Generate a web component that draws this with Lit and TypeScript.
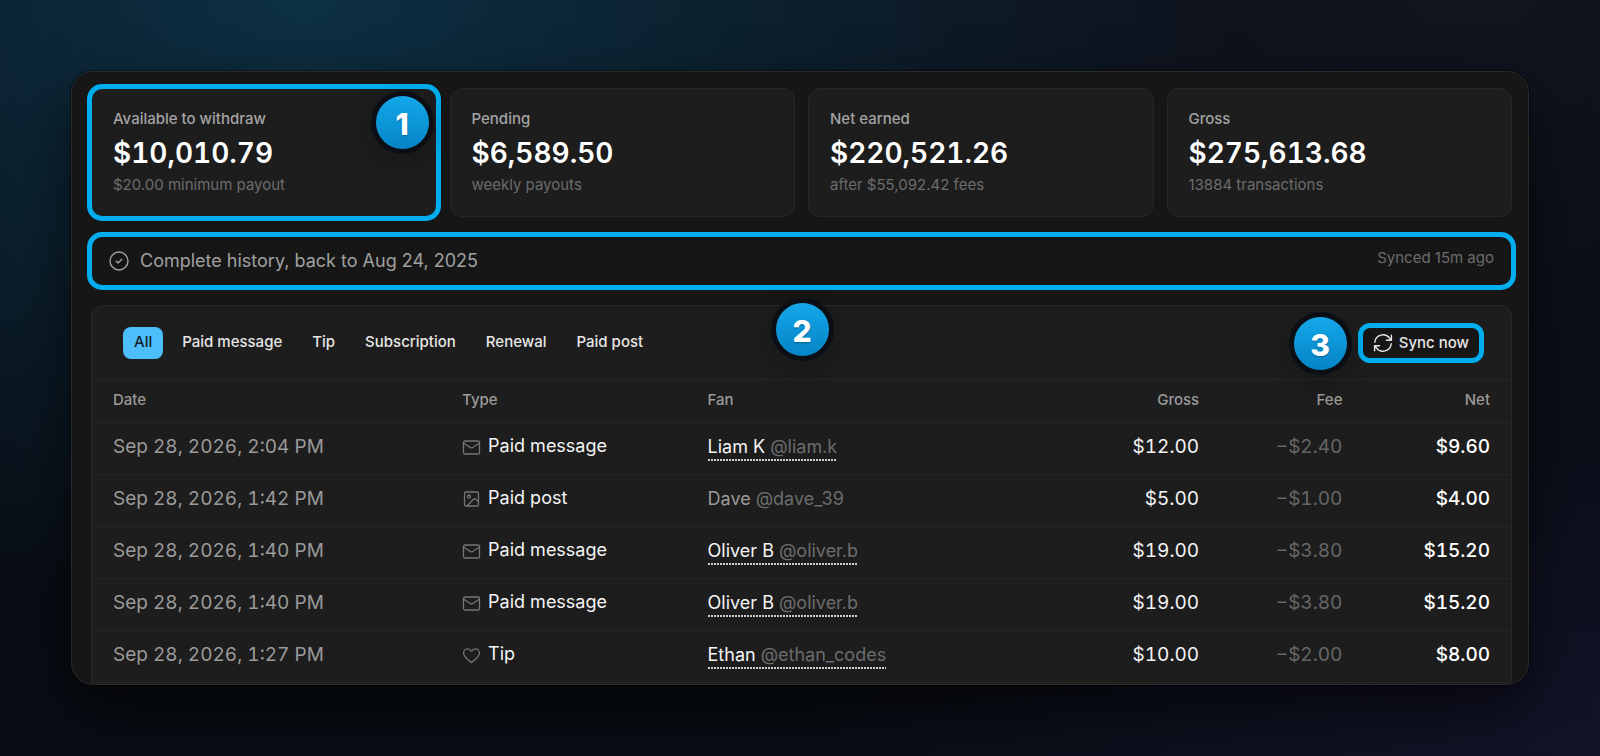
import { LitElement, html, svg, css, nothing } from "lit";
import { customElement, property, state } from "lit/decorators.js";
import { classMap } from "lit/directives/class-map.js";

type Kind = "Paid message" | "Paid post" | "Tip";

interface Transaction {
  date: string;
  kind: Kind;
  fan: string;
  handle: string;
  linked: boolean;
  gross: string;
  fee: string;
  net: string;
}

const STATS = [
  { label: "Available to withdraw", value: "$10,010.79", note: "$20.00 minimum payout", step: 1 },
  { label: "Pending", value: "$6,589.50", note: "weekly payouts" },
  { label: "Net earned", value: "$220,521.26", note: "after $55,092.42 fees" },
  { label: "Gross", value: "$275,613.68", note: "13884 transactions" },
];

const FILTERS = ["All", "Paid message", "Tip", "Subscription", "Renewal", "Paid post"];

const ROWS: Transaction[] = [
  { date: "Sep 28, 2026, 2:04 PM", kind: "Paid message", fan: "Liam K", handle: "@liam.k", linked: true, gross: "$12.00", fee: "−$2.40", net: "$9.60" },
  { date: "Sep 28, 2026, 1:42 PM", kind: "Paid post", fan: "Dave", handle: "@dave_39", linked: false, gross: "$5.00", fee: "−$1.00", net: "$4.00" },
  { date: "Sep 28, 2026, 1:40 PM", kind: "Paid message", fan: "Oliver B", handle: "@oliver.b", linked: true, gross: "$19.00", fee: "−$3.80", net: "$15.20" },
  { date: "Sep 28, 2026, 1:40 PM", kind: "Paid message", fan: "Oliver B", handle: "@oliver.b", linked: true, gross: "$19.00", fee: "−$3.80", net: "$15.20" },
  { date: "Sep 28, 2026, 1:27 PM", kind: "Tip", fan: "Ethan", handle: "@ethan_codes", linked: true, gross: "$10.00", fee: "−$2.00", net: "$8.00" },
];

const GLYPHS: Record<Kind, unknown> = {
  "Paid message": svg`<rect x="1.5" y="3" width="16" height="13" rx="1.6"/><path d="M1.8 5.2 8.3 9.5a2.2 2.2 0 0 0 2.4 0L17.2 5.2"/>`,
  "Paid post": svg`<rect x="2.5" y="2" width="14" height="14" rx="1.6"/><circle cx="7" cy="6.5" r="1.5"/><path d="M5 16 11.6 9.2a1.6 1.6 0 0 1 2.3 0L16.5 11.8"/>`,
  Tip: svg`<path d="M9.5 16.6C5 13.4 1.6 10.6 1.6 7.1 1.6 4.7 3.4 2.9 5.6 2.9c1.6 0 3 .9 3.9 2.4.9-1.5 2.3-2.4 3.9-2.4 2.2 0 4 1.8 4 4.2 0 3.5-3.4 6.3-7.9 9.5Z"/>`,
};

@customElement("step-badge")
export class StepBadge extends LitElement {
  @property({ type: Number }) step = 1;

  static styles = css`
    :host {
      display: grid;
      place-items: center;
      box-sizing: border-box;
      width: 53px;
      height: 53px;
      padding-top: 3px;
      border-radius: 50%;
      background: linear-gradient(#14a8ea, #0484c6);
      box-shadow: 0 0 0 5px #0b0f15, 0 8px 22px 4px rgba(8, 12, 18, 0.3);
      color: #fff;
      font-size: 30px;
      font-weight: 800;
      line-height: 36px;
      text-shadow: 0 1px 2px rgba(0, 0, 0, 0.3);
    }
  `;

  render() {
    return html`${this.step}`;
  }
}

@customElement("stat-card")
export class StatCard extends LitElement {
  @property() label = "";
  @property() value = "";
  @property() note = "";

  static styles = css`
    :host {
      display: grid;
      align-content: start;
      gap: 4px;
      padding: 19px 21px 20px;
      border: 1px solid #272727;
      border-radius: 12px;
      background: #1d1d1d;
    }
    .label,
    .note {
      font-size: 15px;
      line-height: 22px;
    }
    .label {
      color: #a3a3a3;
      font-weight: 500;
    }
    .note {
      color: #6c6c6c;
    }
    .value {
      padding-top: 2px;
      color: #fff;
      font-size: 28px;
      font-weight: 600;
      line-height: 34px;
      font-variant-numeric: tabular-nums;
    }
  `;

  render() {
    return html`
      <div class="label">${this.label}</div>
      <div class="value">${this.value}</div>
      <div class="note">${this.note}</div>
    `;
  }
}

@customElement("app-root")
export class AppRoot extends LitElement {
  @state() private filter = "All";

  static styles = css`
    :host {
      display: flex;
      flex-direction: column;
      box-sizing: border-box;
      min-height: 100vh;
      padding: 71px;
      font-family: Inter, "Liberation Sans", sans-serif;
      color: #f2f2f2;
      background:
        radial-gradient(ellipse 58% 82% at 19% 0%, rgba(14, 56, 78, 0.82), rgba(14, 56, 78, 0)),
        radial-gradient(ellipse 50% 55% at 100% 100%, rgba(22, 22, 48, 0.75), rgba(22, 22, 48, 0)),
        radial-gradient(ellipse 60% 60% at 92% 0%, rgba(18, 22, 34, 0.85), rgba(18, 22, 34, 0)),
        #090d14;
    }
    .panel {
      display: flex;
      flex-direction: column;
      gap: 19px;
      padding: 16px 16px 0 19px;
      border: 1px solid #2b2b2b;
      border-radius: 22px;
      overflow: hidden;
      background: #161616;
      box-shadow: 0 0 0 1px rgba(0, 0, 0, 0.45), 0 26px 60px rgba(0, 0, 0, 0.6);
    }
    .stats {
      display: grid;
      grid-template-columns: repeat(4, 1fr);
      gap: 13px;
    }
    .slot {
      display: grid;
      position: relative;
    }
    .ringed {
      outline: 5px solid #00aeef;
      outline-offset: -1px;
      border-radius: 11px;
    }
    .in-card {
      position: absolute;
      top: 8px;
      right: 8px;
    }
    .status {
      display: flex;
      position: relative;
      gap: 11px;
      align-items: flex-start;
      padding: 12px 17px;
      border: 1px solid #222;
      color: #a0a0a0;
      font-size: 18px;
      line-height: 24px;
    }
    .status svg {
      margin-top: 2px;
    }
    .synced {
      margin-left: auto;
      color: #6c6c6c;
      font-size: 15px;
      line-height: 18px;
    }
    .below {
      position: absolute;
      z-index: 1;
      top: calc(100% + 18px);
      left: calc(50% - 26px);
    }
    svg {
      display: block;
      flex: none;
      fill: none;
      stroke: currentColor;
      stroke-linecap: round;
      stroke-linejoin: round;
    }
    .ledger {
      border: 1px solid #272727;
      border-bottom: 0;
      border-radius: 12px 12px 0 0;
      padding-bottom: 1px;
      background: #1d1d1d;
    }
    .toolbar {
      display: flex;
      align-items: center;
      justify-content: space-between;
      padding: 21px 31px 20px;
      border-bottom: 1px solid #272727;
    }
    .filters {
      display: flex;
      gap: 8px;
    }
    button {
      margin: 0;
      padding: 5px 11px 7px;
      border: 0;
      border-radius: 8px;
      background: transparent;
      color: #e6e6e6;
      font: 500 15px/20px Inter, "Liberation Sans", sans-serif;
      cursor: pointer;
    }
    .on {
      background: #4cbef9;
      color: #10212b;
    }
    .sync {
      position: relative;
    }
    .sync-button {
      display: flex;
      gap: 6px;
      padding: 6px 11px;
      background: #161616;
      border-radius: 8px;
    }
    .beside {
      position: absolute;
      top: calc(50% - 26px);
      right: calc(100% + 15px);
    }
    table {
      width: 100%;
      table-layout: fixed;
      border-collapse: separate;
      border-spacing: 0;
    }
    .c-date {
      width: 24.6%;
    }
    .c-type {
      width: 17.3%;
    }
    .c-money {
      width: 10.1%;
    }
    .c-net {
      width: 10.4%;
    }
    th,
    td {
      text-align: left;
      white-space: nowrap;
      border-bottom: 1px solid #242424;
    }
    th {
      padding: 10px 21px 12px;
      color: #9a9a9a;
      font-size: 15px;
      font-weight: 500;
      line-height: 20px;
    }
    td {
      padding: 11px 21px 14px;
      font-size: 18px;
      line-height: 26px;
    }
    .date,
    td.money {
      font-size: 19px;
      font-variant-numeric: tabular-nums;
    }
    .date {
      color: #9a9a9a;
    }
    .money {
      text-align: right;
    }
    .gross {
      color: #f4f4f4;
    }
    .fee {
      color: #666;
    }
    .net {
      color: #fff;
      font-weight: 500;
    }
    .kind {
      display: flex;
      gap: 7px;
      line-height: 24px;
      padding-bottom: 2px;
      color: #f4f4f4;
    }
    .kind svg {
      margin-top: 4px;
      color: #757575;
    }
    .fan {
      color: #9a9a9a;
    }
    a.fan {
      color: #f4f4f4;
      padding-bottom: 4px;
      text-decoration: none;
      background: repeating-linear-gradient(90deg, #cfcfcf 0 2px, #1d1d1d 2px 3px) left bottom / 100% 2px no-repeat;
    }
    .handle {
      color: #6c6c6c;
    }
  `;

  private renderRow(row: Transaction) {
    const who = html`${row.fan} <span class="handle">${row.handle}</span>`;
    return html`
      <tr>
        <td class="date">${row.date}</td>
        <td>
          <div class="kind">
            <svg width="19" height="19" viewBox="0 0 19 19" stroke-width="1.3" aria-hidden="true">${GLYPHS[row.kind]}</svg>
            ${row.kind}
          </div>
        </td>
        <td>${row.linked ? html`<a class="fan" href="#fan">${who}</a>` : html`<span class="fan">${who}</span>`}</td>
        <td class="money gross">${row.gross}</td>
        <td class="money fee">${row.fee}</td>
        <td class="money net">${row.net}</td>
      </tr>
    `;
  }

  render() {
    const rows = this.filter === "All" ? ROWS : ROWS.filter((r) => r.kind === this.filter);
    return html`
      <main class="panel">
        <section class="stats">
          ${STATS.map(
            (s) => html`
              <div class=${classMap({ slot: true, ringed: !!s.step })}>
                <stat-card .label=${s.label} .value=${s.value} .note=${s.note}></stat-card>
                ${s.step ? html`<step-badge class="in-card" .step=${s.step}></step-badge>` : nothing}
              </div>
            `,
          )}
        </section>

        <section class="status ringed">
          <svg width="20" height="20" viewBox="0 0 20 20" stroke-width="1.4" aria-hidden="true">
            <circle cx="10" cy="10" r="9" />
            <path d="m7.2 10.3 1.9 1.8 3.7-3.9" />
          </svg>
          <span>Complete history, back to Aug 24, 2025</span>
          <span class="synced">Synced 15m ago</span>
          <step-badge class="below" .step=${2}></step-badge>
        </section>

        <section class="ledger">
          <div class="toolbar">
            <div class="filters">
              ${FILTERS.map(
                (f) => html`<button type="button" class=${classMap({ on: f === this.filter })} @click=${() => (this.filter = f)}>${f}</button>`,
              )}
            </div>
            <div class="sync">
              <step-badge class="beside" .step=${3}></step-badge>
              <button type="button" class="sync-button ringed">
                <svg width="20" height="20" viewBox="0 0 20 20" stroke-width="1.4" aria-hidden="true">
                  <path d="M1.8 9.2A8.2 8.2 0 0 1 16.6 5.2L18.2 7M18.4 2.2V7.2H13.4" />
                  <path d="M18.2 10.8A8.2 8.2 0 0 1 3.4 14.8L1.8 13M1.6 17.8V12.8H6.6" />
                </svg>
                Sync now
              </button>
            </div>
          </div>
          <table>
            <colgroup>
              <col class="c-date" />
              <col class="c-type" />
              <col />
              <col class="c-money" />
              <col class="c-money" />
              <col class="c-net" />
            </colgroup>
            <thead>
              <tr>
                <th scope="col">Date</th>
                <th scope="col">Type</th>
                <th scope="col">Fan</th>
                <th scope="col" class="money">Gross</th>
                <th scope="col" class="money">Fee</th>
                <th scope="col" class="money">Net</th>
              </tr>
            </thead>
            <tbody>
              ${rows.map((r) => this.renderRow(r))}
            </tbody>
          </table>
        </section>
      </main>
    `;
  }
}
